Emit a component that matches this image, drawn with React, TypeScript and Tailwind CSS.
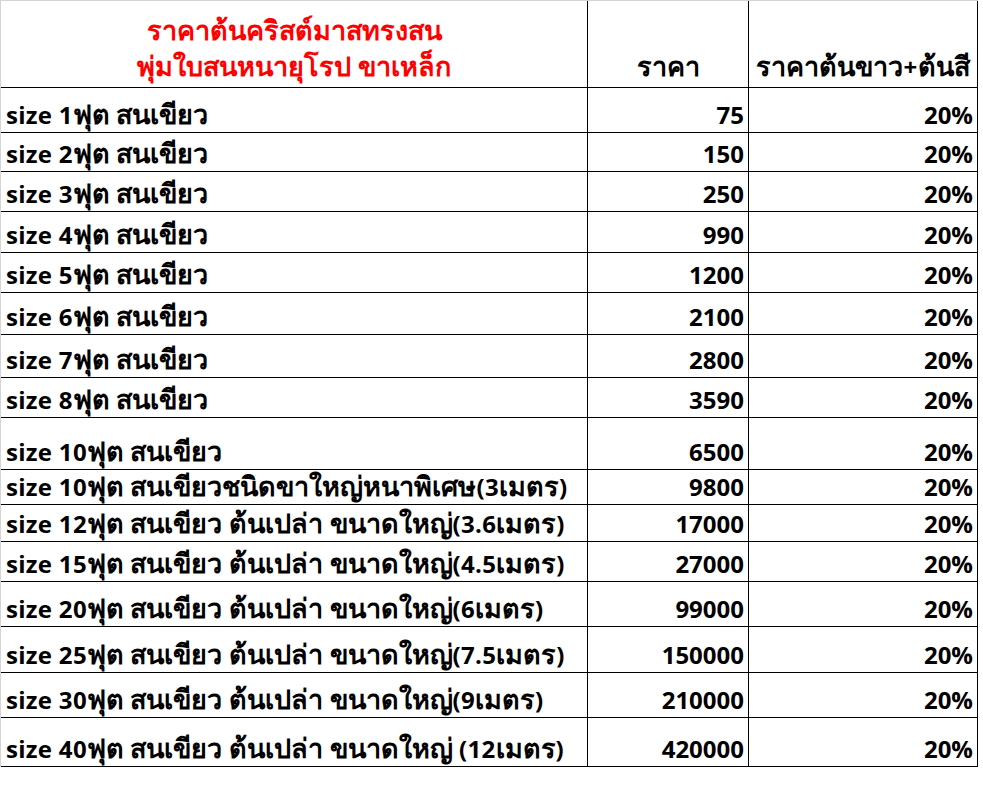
const rows: { name: string; price: string; h: string }[] = [
  { name: 'size 1ฟุต สนเขียว', price: '75', h: 'h-[45px]' },
  { name: 'size 2ฟุต สนเขียว', price: '150', h: 'h-[39px]' },
  { name: 'size 3ฟุต สนเขียว', price: '250', h: 'h-[40px]' },
  { name: 'size 4ฟุต สนเขียว', price: '990', h: 'h-[41px]' },
  { name: 'size 5ฟุต สนเขียว', price: '1200', h: 'h-[40px]' },
  { name: 'size 6ฟุต สนเขียว', price: '2100', h: 'h-[42px]' },
  { name: 'size 7ฟุต สนเขียว', price: '2800', h: 'h-[43px]' },
  { name: 'size 8ฟุต สนเขียว', price: '3590', h: 'h-[40px]' },
  { name: 'size 10ฟุต สนเขียว', price: '6500', h: 'h-[52px]' },
  { name: 'size 10ฟุต สนเขียวชนิดขาใหญ่หนาพิเศษ(3เมตร)', price: '9800', h: 'h-[35px]' },
  { name: 'size 12ฟุต สนเขียว ต้นเปล่า ขนาดใหญ่(3.6เมตร)', price: '17000', h: 'h-[37px]' },
  { name: 'size 15ฟุต สนเขียว ต้นเปล่า ขนาดใหญ่(4.5เมตร)', price: '27000', h: 'h-[40px]' },
  { name: 'size 20ฟุต สนเขียว ต้นเปล่า ขนาดใหญ่(6เมตร)', price: '99000', h: 'h-[45px]' },
  { name: 'size 25ฟุต สนเขียว ต้นเปล่า ขนาดใหญ่(7.5เมตร)', price: '150000', h: 'h-[46px]' },
  { name: 'size 30ฟุต สนเขียว ต้นเปล่า ขนาดใหญ่(9เมตร)', price: '210000', h: 'h-[45px]' },
  { name: 'size 40ฟุต สนเขียว ต้นเปล่า ขนาดใหญ่ (12เมตร)', price: '420000', h: 'h-[49px]' },
];

// Thai runs are set a little larger than the latin runs
const Mixed = ({ text }: { text: string }) => (
  <span>
    {text.split(/([\u0E00-\u0E7F]+)/).map((part, i) =>
      /[\u0E00-\u0E7F]/.test(part) ? (
        <span key={i} className="text-[27px]">
          {part}
        </span>
      ) : (
        <span key={i} className="tracking-[0.3px]">{part}</span>
      )
    )}
  </span>
);

export default function App() {
  return (
    <div className="w-[983px] h-[786px] bg-white overflow-hidden font-['Open_Sans','Noto_Sans',sans-serif] font-bold text-black text-[24px]">
      <div className="w-[978px] border-t border-l border-[#d4d4d4]">
        {/* header */}
        <div className="flex h-[87px] border-b border-black">
          <div className="w-[586px] flex flex-col items-center justify-end pb-[3px] text-[#ff0000] leading-[35px]">
            <Mixed text="ราคาต้นคริสต์มาสทรงสน" />
            <Mixed text="พุ่มใบสนหนายุโรป ขาเหล็ก" />
          </div>
          <div className="w-[161px] border-l border-black flex items-end justify-center pb-[3px] leading-[35px]">
            <Mixed text="ราคา" />
          </div>
          <div className="w-[230px] border-x border-black flex items-end justify-center pb-[3px] leading-[35px] whitespace-nowrap">
            <Mixed text="ราคาต้นขาว+ต้นสี" />
          </div>
        </div>

        {rows.map((r) => (
          <div key={r.name} className={`flex border-b border-black ${r.h}`}>
            <div className="w-[586px] flex items-end pl-[5px] pb-[1px] leading-[33px] whitespace-nowrap">
              <Mixed text={r.name} />
            </div>
            <div className="w-[161px] border-l border-black flex items-end justify-end pr-[4px] pb-[1px] leading-[33px]">
              {r.price}
            </div>
            <div className="w-[230px] border-x border-black flex items-end justify-end pr-[4px] pb-[1px] leading-[33px]">
              20%
            </div>
          </div>
        ))}
      </div>
    </div>
  );
}
